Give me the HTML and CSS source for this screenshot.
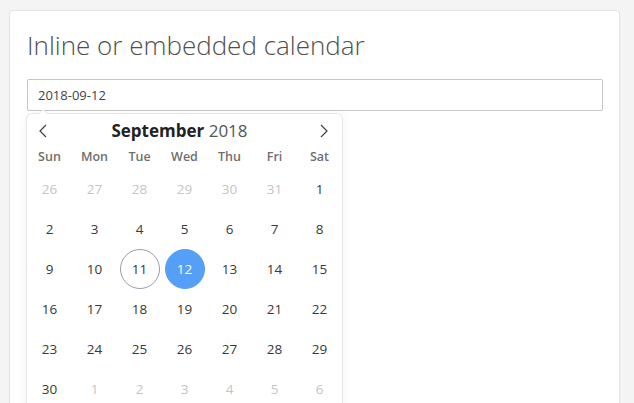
FILE: index.html
```html
<!DOCTYPE html>
<html>
<head lang="en">
    <meta charset="UTF-8">
    <title>Inline calendar</title>
    <link rel="stylesheet" href="styles.css">
</head>
<body>
<div class="card">
    <h2 class="card-title">Inline or embedded calendar</h2>
    <input class="date-input" type="text" value="2018-09-12">
    <div class="calendar">
        <div class="cal-head">
            <span class="cal-arrow">
                <svg width="8" height="14" viewBox="0 0 8 14"><path d="M7 1L1 7l6 6" fill="none" stroke="#3c3f40" stroke-width="1.2"/></svg>
            </span>
            <span class="cal-month"><b>September</b> 2018</span>
            <span class="cal-arrow">
                <svg width="8" height="14" viewBox="0 0 8 14"><path d="M1 1l6 6-6 6" fill="none" stroke="#3c3f40" stroke-width="1.2"/></svg>
            </span>
        </div>
        <div class="cal-weekdays">
            <span>Sun</span><span>Mon</span><span>Tue</span><span>Wed</span><span>Thu</span><span>Fri</span><span>Sat</span>
        </div>
        <div class="cal-days">
            <span class="other">26</span><span class="other">27</span><span class="other">28</span><span class="other">29</span><span class="other">30</span><span class="other">31</span><span>1</span>
            <span>2</span><span>3</span><span>4</span><span>5</span><span>6</span><span>7</span><span>8</span>
            <span>9</span><span>10</span><span class="today">11</span><span class="selected">12</span><span>13</span><span>14</span><span>15</span>
            <span>16</span><span>17</span><span>18</span><span>19</span><span>20</span><span>21</span><span>22</span>
            <span>23</span><span>24</span><span>25</span><span>26</span><span>27</span><span>28</span><span>29</span>
            <span>30</span><span class="other">1</span><span class="other">2</span><span class="other">3</span><span class="other">4</span><span class="other">5</span><span class="other">6</span>
        </div>
    </div>
</div>
</body>
</html>
```

FILE: styles.css
```css
*{
    margin: 0;
    padding: 0;
    box-sizing: border-box;
}
body{
    background: #f4f4f4;
    font-family: "Open Sans", "Noto Sans", sans-serif;
    padding: 10px 0 0 9px;
    overflow: hidden;
}
.card{
    width: 611px;
    height: 420px;
    background: #fff;
    border: 1px solid #e2e2e2;
    border-radius: 4px;
    padding: 18px 16px 0 17px;
}
.card-title{
    font-size: 26px;
    font-weight: 300;
    color: #505050;
    line-height: 32px;
    margin-bottom: 18px;
}
.date-input{
    display: block;
    width: 576px;
    height: 32px;
    border: 1px solid #c6c6c6;
    border-radius: 2px;
    padding: 0 10px;
    font-family: "Open Sans", sans-serif;
    font-size: 13px;
    color: #444;
    outline: none;
}
.calendar{
    position: relative;
    width: 315px;
    margin-top: 3px;
    background: #fff;
    border-radius: 5px;
    box-shadow: 0 0 0 1px #e6e6e6, 0 3px 13px rgba(0,0,0,0.06);
}
.calendar:before{
    content: "";
    position: absolute;
    left: 11px;
    top: -5px;
    border: 5px solid transparent;
    border-top: 0;
    border-bottom-color: #e6e6e6;
}
.calendar:after{
    content: "";
    position: absolute;
    left: 12px;
    top: -4px;
    border: 4px solid transparent;
    border-top: 0;
    border-bottom-color: #fff;
}
.cal-head{
    height: 30px;
    display: flex;
    align-items: center;
    justify-content: space-between;
    padding: 3px 14px 0 12px;
}
.cal-arrow{
    display: flex;
}
.cal-month{
    font-size: 17px;
    color: #555;
    font-weight: 400;
    margin-left: -8px;
}
.cal-month b{
    color: #222;
    font-weight: 700;
}
.cal-weekdays{
    display: grid;
    grid-template-columns: repeat(7, 45px);
    height: 24px;
    align-items: center;
    text-align: center;
    font-size: 12.5px;
    font-weight: 600;
    color: #6f6f6f;
}
.cal-days{
    display: grid;
    grid-template-columns: repeat(7, 45px);
    grid-auto-rows: 40px;
    margin-top: 1px;
    font-size: 13.5px;
    color: #393939;
}
.cal-days span{
    display: flex;
    align-items: center;
    justify-content: center;
    height: 40px;
    width: 40px;
    margin: 0 auto;
    border-radius: 50%;
    border: 1px solid transparent;
}
.cal-days .other{
    color: #c4c4c4;
}
.cal-days .today{
    border-color: #959ea9;
}
.cal-days .selected{
    background: #569ff7;
    border-color: #569ff7;
    color: #fff;
}
```
